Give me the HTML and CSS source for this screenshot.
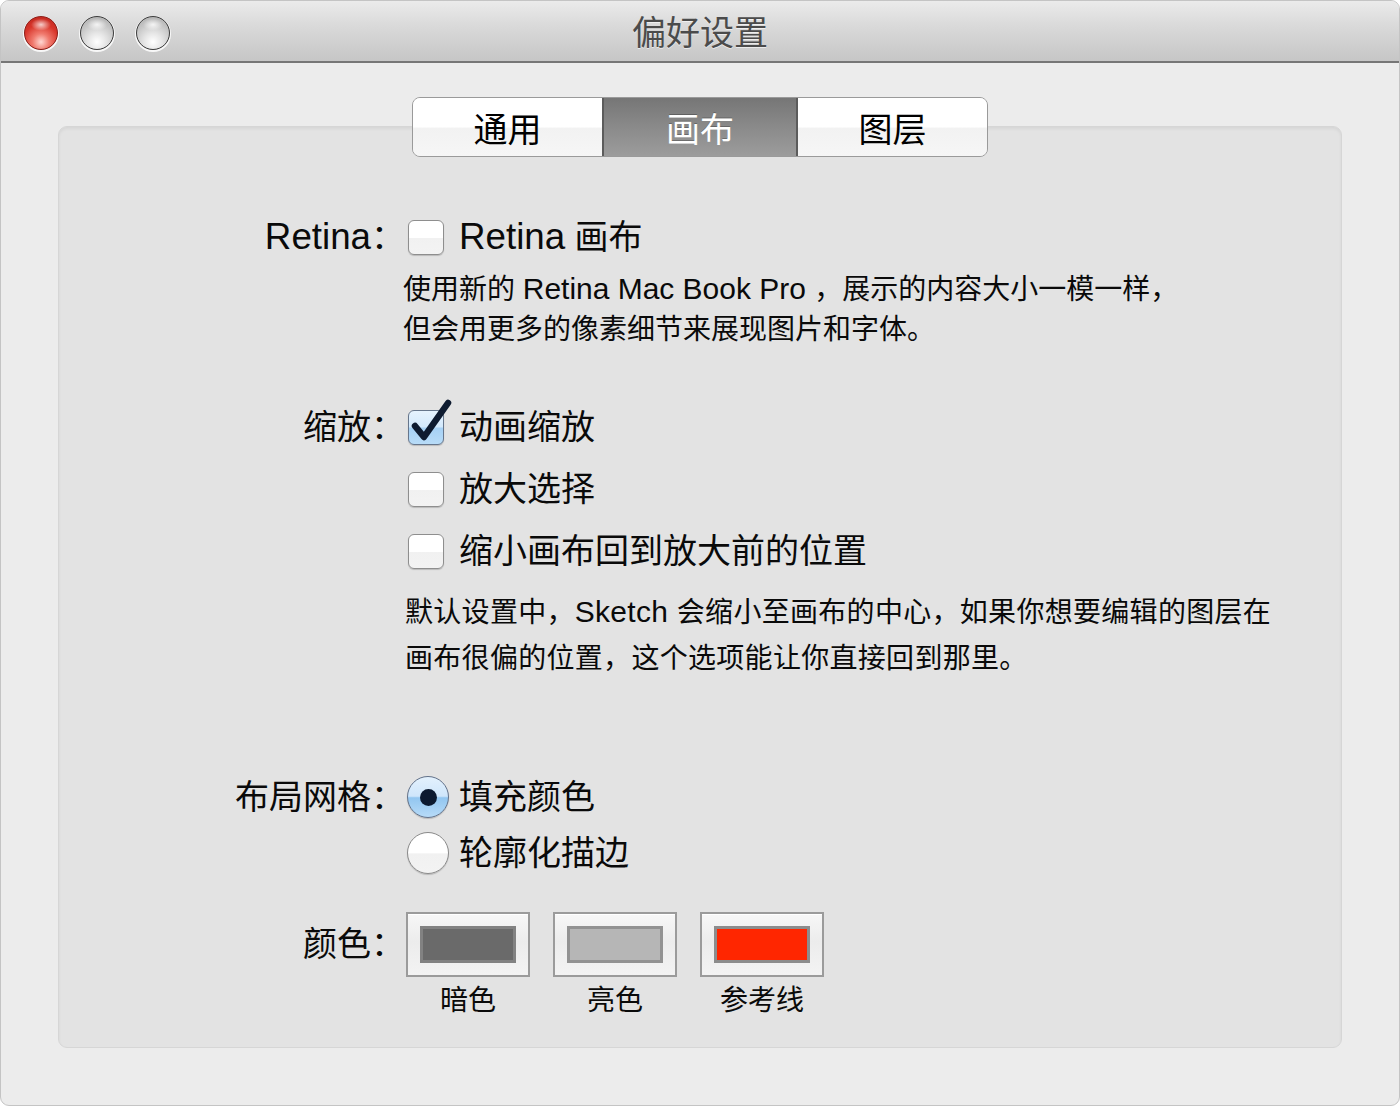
FILE: index.html
```html
<!DOCTYPE html>
<html lang="zh-CN">
<head>
<meta charset="utf-8">
<title>偏好设置</title>
<link rel="stylesheet" href="styles.css">
</head>
<body>
<div class="window">
  <div class="titlebar">
    <div class="lights">
      <span class="light red"></span>
      <span class="light gray"></span>
      <span class="light gray"></span>
    </div>
    <div class="title">偏好设置</div>
  </div>
  <div class="content">
    <div class="tabs">
      <div class="tab t1">通用</div>
      <div class="tab t2 active">画布</div>
      <div class="tab t3">图层</div>
    </div>
    <div class="panel">
      <div class="row r-retina">
        <div class="label"><span class="lat">Retina</span>：</div>
        <div class="opt"><span class="cb"></span><span class="opt-text"><span class="lat">Retina</span> 画布</span></div>
      </div>
      <div class="desc d1">使用新的 <span class="lat">Retina Mac Book Pro </span>，展示的内容大小一模一样，<br>但会用更多的像素细节来展现图片和字体。</div>

      <div class="row r-zoom">
        <div class="label">缩放：</div>
        <div class="opt"><span class="cb checked"><svg class="tick" viewBox="0 0 50 50" width="50" height="50"><path d="M9 28 L18 39 L42 5" fill="none" stroke="#0e1b30" stroke-width="6.5" stroke-linecap="round" stroke-linejoin="round"/></svg></span><span class="opt-text">动画缩放</span></div>
      </div>
      <div class="row r-sub">
        <div class="label"></div>
        <div class="opt"><span class="cb"></span><span class="opt-text">放大选择</span></div>
      </div>
      <div class="row r-sub">
        <div class="label"></div>
        <div class="opt"><span class="cb"></span><span class="opt-text">缩小画布回到放大前的位置</span></div>
      </div>
      <div class="desc d2">默认设置中，<span class="lat">Sketch </span>会缩小至画布的中心，如果你想要编辑的图层在<br>画布很偏的位置，这个选项能让你直接回到那里。</div>

      <div class="row r-grid">
        <div class="label">布局网格：</div>
        <div class="opt"><span class="radio on"><span class="dot"></span></span><span class="opt-text">填充颜色</span></div>
      </div>
      <div class="row r-grid2">
        <div class="label"></div>
        <div class="opt"><span class="radio"></span><span class="opt-text">轮廓化描边</span></div>
      </div>

      <div class="row r-color">
        <div class="label">颜色：</div>
        <div class="swatches">
          <div class="sw"><div class="well"><span class="chip chip-dark"></span></div><div class="sw-label">暗色</div></div>
          <div class="sw"><div class="well"><span class="chip chip-light"></span></div><div class="sw-label">亮色</div></div>
          <div class="sw"><div class="well"><span class="chip chip-red"></span></div><div class="sw-label">参考线</div></div>
        </div>
      </div>
    </div>
  </div>
</div>
</body>
</html>
```

FILE: styles.css
```css
html, body {
  margin: 0;
  padding: 0;
  background: #ffffff;
}
body {
  width: 1400px;
  height: 1106px;
  overflow: hidden;
  font-family: "Liberation Sans", "Noto Sans CJK SC", sans-serif;
  color: #0a0a0a;
}
.window {
  width: 1400px;
  height: 1106px;
  box-sizing: border-box;
  border: 1px solid #c4c4c4;
  border-radius: 9px;
  overflow: hidden;
  background: #ececec;
  display: flex;
  flex-direction: column;
}
.titlebar {
  height: 60px;
  flex: none;
  border-bottom: 2px solid #767676;
  background: linear-gradient(to bottom, #ebebeb 0%, #dadada 40%, #c6c6c6 100%);
  display: flex;
  align-items: center;
  position: relative;
}
.lights {
  display: flex;
  gap: 22px;
  padding-left: 23px;
  padding-top: 3px;
}
.light {
  width: 34px;
  height: 34px;
  border-radius: 50%;
  box-sizing: border-box;
  box-shadow: 0 1px 0 1px rgba(255,255,255,0.85);
}
.light.red {
  border: 1px solid #8e1d17;
  background:
    radial-gradient(ellipse 10px 6px at 50% 24%, rgba(255,255,255,0.75), rgba(255,255,255,0) 100%),
    radial-gradient(circle at 50% 78%, #ffd7d2 0%, #f07a6e 28%, #d8362b 60%, #b8221a 100%);
}
.light.gray {
  border: 1.5px solid #3d3d3d;
  background:
    radial-gradient(ellipse 10px 6px at 50% 24%, rgba(255,255,255,0.8), rgba(255,255,255,0) 100%),
    radial-gradient(circle at 50% 78%, #ffffff 0%, #e6e6e6 30%, #c4c4c4 65%, #a9a9a9 100%);
}
.title {
  position: absolute;
  left: 0;
  right: 0;
  top: 10px;
  text-align: center;
  font-size: 34px;
  line-height: 44px;
  color: #4b4b4b;
  text-shadow: 0 1px 0 rgba(255,255,255,0.6);
}
.content {
  flex: 1;
  padding: 34px 57px 57px 57px;
  display: flex;
  flex-direction: column;
}
.tabs {
  align-self: center;
  display: flex;
  height: 60px;
  box-sizing: border-box;
  border: 1px solid #9a9a9a;
  border-radius: 8px;
  overflow: hidden;
  position: relative;
  z-index: 2;
}
.tab {
  display: flex;
  align-items: center;
  justify-content: center;
  font-size: 34px;
  color: #000;
  background: linear-gradient(to bottom, #ffffff 0%, #ffffff 50%, #f2f2f2 52%, #f6f6f6 100%);
}
.tab.t1 { width: 189px; }
.tab.t2 { width: 196px; }
.tab.t3 { width: 189px; }
.tab.active {
  color: #ffffff;
  background: linear-gradient(to bottom, #767676 0%, #8a8a8a 50%, #9c9c9c 100%);
  border-left: 2px solid #5c5c5c;
  border-right: 2px solid #5c5c5c;
  box-sizing: border-box;
  text-shadow: 0 -1px 0 rgba(0,0,0,0.25);
}
.panel {
  flex: 1;
  margin-top: -31px;
  background: #e3e3e3;
  border: 1px solid #d6d6d6;
  border-radius: 9px;
  box-shadow: inset 0 2px 3px rgba(0,0,0,0.06);
  padding-top: 90px;
  position: relative;
  z-index: 1;
}
.row {
  display: grid;
  grid-template-columns: 346px 1fr;
  align-items: center;
}
.label {
  text-align: right;
  font-size: 34px;
  line-height: 40px;
  white-space: nowrap;
}
.lat {
  font-size: 1.08em;
}
.opt {
  display: flex;
  align-items: center;
  height: 40px;
}
.opt-text {
  font-size: 34px;
  line-height: 40px;
  white-space: nowrap;
}
.cb {
  width: 36px;
  height: 35px;
  box-sizing: border-box;
  margin-left: 3px;
  margin-right: 15px;
  border: 1px solid #8e8e8e;
  border-radius: 6px;
  background: linear-gradient(to bottom, #ffffff 0%, #ffffff 50%, #f1f1f1 52%, #f3f3f3 100%);
  box-shadow: 0 1px 1px rgba(0,0,0,0.18);
  position: relative;
  flex: none;
}
.cb.checked {
  border-color: #66768c;
  background: linear-gradient(to bottom, #e6f3fe 0%, #d3e9fc 48%, #a6d1f5 52%, #b8dcf8 100%);
}
.tick {
  position: absolute;
  left: -3px;
  top: -13px;
  overflow: visible;
}
.desc {
  margin-left: 344px;
  font-size: 28px;
  white-space: nowrap;
}
.desc .lat { font-size: 1.07em; }
.d1 {
  line-height: 40px;
  margin-top: 12px;
}
.r-zoom { margin-top: 57px; }
.r-sub { margin-top: 22px; }
.d2 {
  line-height: 46px;
  margin-top: 18px;
  margin-left: 346px;
  letter-spacing: 0.3px;
}
.r-grid { margin-top: 94px; }
.r-grid .opt, .r-grid2 .opt { height: 42px; }
.r-grid2 { margin-top: 14px; }
.radio {
  width: 42px;
  height: 42px;
  box-sizing: border-box;
  margin-left: 2px;
  margin-right: 10px;
  border-radius: 50%;
  border: 1px solid #8a8a8a;
  background: linear-gradient(to bottom, #ffffff 0%, #ffffff 50%, #f1f1f1 52%, #f3f3f3 100%);
  box-shadow: 0 1px 1px rgba(0,0,0,0.18);
  display: flex;
  align-items: center;
  justify-content: center;
  flex: none;
}
.radio.on {
  border-color: #62728a;
  background: linear-gradient(to bottom, #e3f1fd 0%, #cfe6fb 48%, #92c6f0 52%, #b7dbf8 100%);
}
.dot {
  width: 17px;
  height: 17px;
  border-radius: 50%;
  background: #0c1a30;
}
.r-color {
  margin-top: 38px;
  align-items: start;
}
.r-color .label {
  line-height: 64px;
}
.swatches {
  display: flex;
  gap: 23px;
  margin-left: 1px;
}
.sw {
  width: 124px;
  display: flex;
  flex-direction: column;
  align-items: center;
}
.well {
  width: 124px;
  height: 65px;
  box-sizing: border-box;
  border: 2px solid #9b9b9b;
  background: linear-gradient(to bottom, #f7f7f7 0%, #ececec 45%, #f3f3f3 100%);
  display: flex;
  align-items: center;
  justify-content: center;
  box-shadow: inset 0 1px 0 #ffffff;
}
.chip {
  width: 96px;
  height: 37px;
  box-sizing: border-box;
  border: 3px solid #808080;
}
.chip-dark { background: #6a6a6a; border-color: #828282; }
.chip-light { background: #b6b6b6; border-color: #929292; }
.chip-red { background: #ff2600; border-color: #8c8c8c; }
.sw-label {
  margin-top: 6px;
  font-size: 28px;
  line-height: 36px;
  white-space: nowrap;
}
```
